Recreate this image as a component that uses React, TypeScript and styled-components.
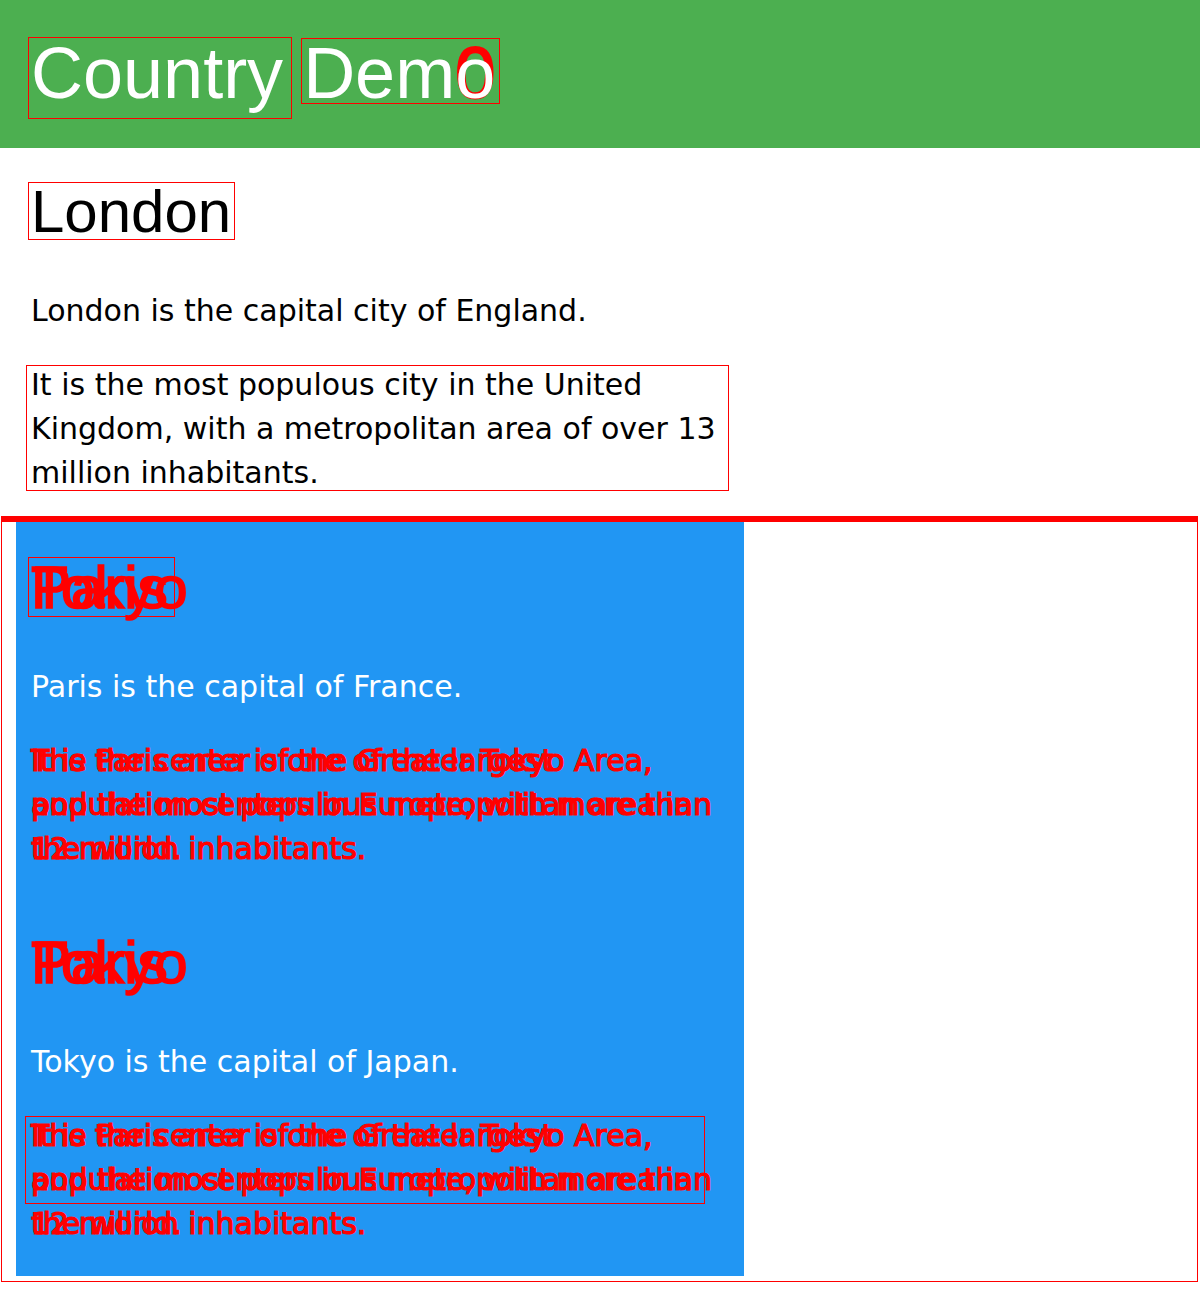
import React from "react";
import styled, { createGlobalStyle, css } from "styled-components";

type Box = { t: number; r: number; b: number; l: number };

const GlobalStyle = createGlobalStyle`
  html, body {
    margin: 0;
    padding: 0;
    background: #ffffff;
  }
  body {
    font-family: "DejaVu Sans", Verdana, sans-serif;
  }
`;

const markCss = css<{ $mark?: Box }>`
  ${({ $mark }) =>
    $mark &&
    css`
      position: relative;
      &::after {
        content: "";
        position: absolute;
        top: ${$mark.t}px;
        right: ${$mark.r}px;
        bottom: ${$mark.b}px;
        left: ${$mark.l}px;
        border: 1px solid #ff0000;
        pointer-events: none;
      }
    `}
`;

const Header = styled.header`
  background: #4caf50;
  height: 148px;
  box-sizing: border-box;
  padding: 32px 0 0 31px;
`;

const Title = styled.h1`
  margin: 0;
  font-family: "Liberation Sans", Arial, sans-serif;
  font-weight: normal;
  font-size: 72px;
  line-height: 83px;
  color: #ffffff;
  white-space: nowrap;
`;

const Word = styled.span<{ $mark?: Box }>`
  ${markCss}
`;

const Stack = styled.span<{ $mark?: Box }>`
  display: inline-grid;
  vertical-align: baseline;
  & > * {
    grid-area: 1 / 1;
  }
  ${markCss}
`;

const GhostGlyph = styled.span`
  color: #ff0000;
  -webkit-text-stroke: 2px #ff0000;
`;

const Section = styled.section`
  padding: 28px 30px 21px 31px;
`;

const CityTitle = styled.h2<{ $light?: boolean }>`
  margin: 0 0 41px;
  font-family: "Liberation Sans", Arial, sans-serif;
  font-weight: normal;
  font-size: 60px;
  line-height: 72px;
  color: ${({ $light }) => ($light ? "#ffffff" : "#000000")};
`;

const Para = styled.p<{ $light?: boolean; $mark?: Box }>`
  margin: 0 0 30px;
  max-width: 692px;
  font-size: 30px;
  line-height: 44px;
  color: ${({ $light }) => ($light ? "#ffffff" : "#000000")};
  ${markCss}
`;

const LastPara = styled(Para)`
  margin-bottom: 0;
`;

const Frame = styled.div`
  box-sizing: border-box;
  width: 1197px;
  margin-left: 1px;
  border: 1px solid #ff0000;
  border-top-width: 6px;
  padding: 0 0 5px 14px;
`;

const Panel = styled.div`
  box-sizing: border-box;
  width: 728px;
  background: #2196f3;
  padding: 30px 14px 0 15px;
  display: flex;
  flex-direction: column;
  gap: 26px;
`;

const Block = styled.article`
  display: flow-root;
`;

const OverlapPara = styled.div<{ $mark?: Box }>`
  display: grid;
  max-width: 682px;
  margin: 0 0 30px;
  & > * {
    grid-area: 1 / 1;
  }
  ${markCss}
`;

const GhostText = styled.p`
  margin: 0;
  font-size: 30px;
  line-height: 44px;
  color: #ff0000;
  -webkit-text-stroke: 1.2px #ff0000;
`;

const GhostTitle = styled.span`
  color: #ff0000;
  -webkit-text-stroke: 1.6px #ff0000;
`;

const cities = {
  paris: {
    name: "Paris",
    lead: "Paris is the capital of France.",
    body: "The Paris area is one of the largest population centers in Europe, with more than 12 million inhabitants.",
  },
  tokyo: {
    name: "Tokyo",
    lead: "Tokyo is the capital of Japan.",
    body: "It is the center of the Greater Tokyo Area, and the most populous metropolitan area in the world.",
  },
};

type CityBlockProps = {
  lead: string;
  titleMark?: Box;
  bodyMark?: Box;
};

function CityBlock({ lead, titleMark, bodyMark }: CityBlockProps) {
  return (
    <Block>
      <CityTitle $light>
        <Stack $mark={titleMark}>
          <GhostTitle>{cities.paris.name}</GhostTitle>
          <GhostTitle>{cities.tokyo.name}</GhostTitle>
        </Stack>
      </CityTitle>
      <Para $light>{lead}</Para>
      <OverlapPara $mark={bodyMark}>
        <GhostText>{cities.paris.body}</GhostText>
        <GhostText>{cities.tokyo.body}</GhostText>
      </OverlapPara>
    </Block>
  );
}

export default function App() {
  return (
    <>
      <GlobalStyle />
      <Header>
        <Title>
          <Word $mark={{ t: 4, r: -9, b: -6, l: -3 }}>Country</Word>{" "}
          <Word $mark={{ t: 5, r: -5, b: 9, l: -2 }}>
            Dem
            <Stack>
              <GhostGlyph>0</GhostGlyph>
              <span>o</span>
            </Stack>
          </Word>
        </Title>
      </Header>

      <Section>
        <CityTitle>
          <Word $mark={{ t: 4, r: -4, b: 5, l: -3 }}>London</Word>
        </CityTitle>
        <Para>London is the capital city of England.</Para>
        <LastPara $mark={{ t: 2, r: -6, b: 4, l: -5 }}>
          It is the most populous city in the United Kingdom, with a metropolitan area of over 13 million inhabitants.
        </LastPara>
      </Section>

      <Frame>
        <Panel>
          <CityBlock lead={cities.paris.lead} titleMark={{ t: 5, r: 13, b: 7, l: -3 }} />
          <CityBlock lead={cities.tokyo.lead} bodyMark={{ t: 2, r: 8, b: 42, l: -6 }} />
        </Panel>
      </Frame>
    </>
  );
}
